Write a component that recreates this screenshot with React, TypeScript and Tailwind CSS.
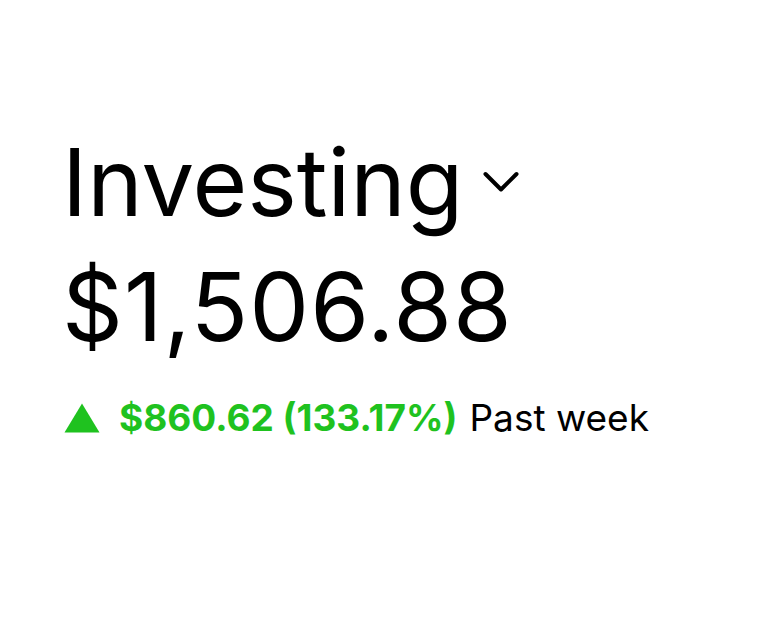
export default function App() {
  return (
    <div className="min-h-[639px] bg-white pl-[62px] pt-[126px] font-['Inter',sans-serif] text-black">
      <div className="flex items-center">
        <h1 className="text-[94px] leading-[112px] font-normal">Investing</h1>
        <svg className="ml-[19px]" width="36" height="22" viewBox="0 0 36 22" fill="none">
          <path d="M2.5 3 L18 18.5 L33.5 3" stroke="black" strokeWidth="4" strokeLinecap="round" strokeLinejoin="round" />
        </svg>
      </div>
      <div className="mt-[14px] text-[95px] leading-[110px] tracking-[1px]">$1,506.88</div>
      <div className="mt-[34px] flex items-center text-[37px] leading-[44px]">
        <svg width="36" height="30" viewBox="0 0 36 30" className="mr-[19px] ml-[2px]">
          <polygon points="18,0.5 35.5,29.5 0.5,29.5" fill="#1fc21f" />
        </svg>
        <span className="font-bold text-[#1fc21f]">$860.62 (133.17%)</span>
        <span className="ml-[12px]">Past week</span>
      </div>
    </div>
  );
}
